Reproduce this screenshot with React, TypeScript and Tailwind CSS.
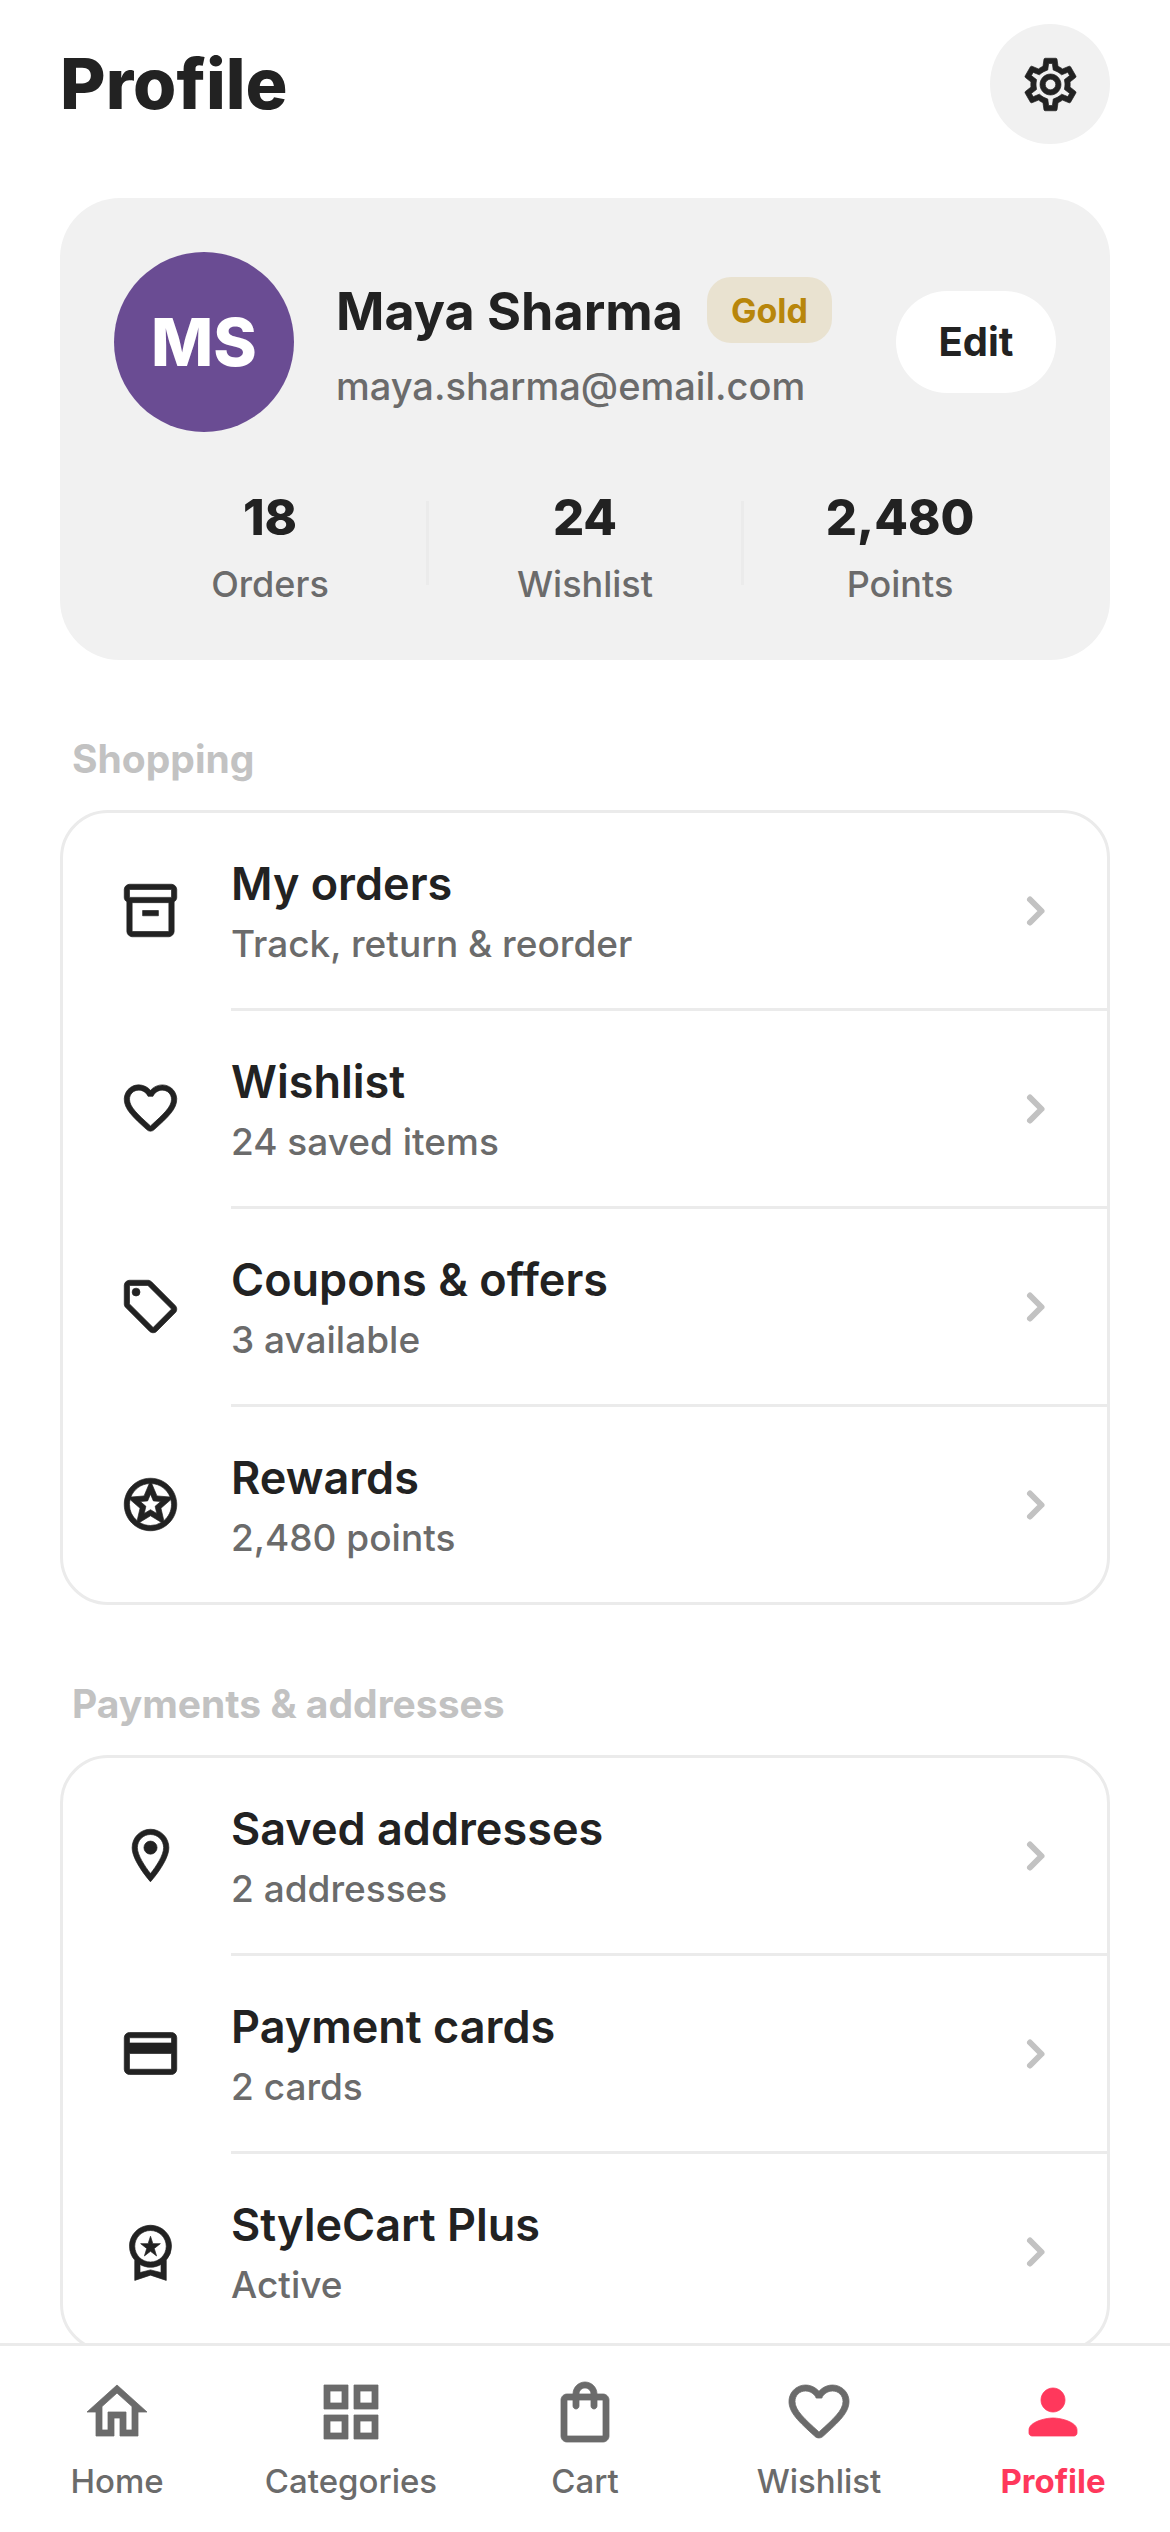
import type { ReactNode } from "react";
import type { IconType } from "react-icons";
import {
  MdOutlineCreditCard,
  MdOutlineGridView,
  MdOutlineHome,
  MdOutlineInventory2,
  MdOutlineLocalOffer,
  MdOutlineSettings,
  MdOutlineStars,
  MdOutlineWorkspacePremium,
} from "react-icons/md";

type IconProps = { className?: string };

function Glyph({ className, children }: IconProps & { children: ReactNode }) {
  return (
    <svg className={className} viewBox="0 0 24 24" fill="currentColor" stroke="currentColor" strokeWidth={0} aria-hidden="true">
      {children}
    </svg>
  );
}

function HeartIcon({ className }: IconProps) {
  return (
    <Glyph className={className}>
      <path d="M19.66 3.99c-2.64-1.8-5.9-.96-7.66 1.1-1.76-2.06-5.02-2.91-7.66-1.1-1.4.96-2.28 2.58-2.34 4.29-.14 3.88 3.3 6.99 8.55 11.76l.1.09c.76.69 1.93.69 2.69-.01l.11-.1c5.25-4.76 8.68-7.87 8.55-11.75-.06-1.7-.94-3.32-2.34-4.28zM12.1 18.55l-.1.1-.1-.1C7.14 14.24 4 11.39 4 8.5 4 6.5 5.5 5 7.5 5c1.54 0 3.04.99 3.57 2.36h1.87C13.46 5.99 14.96 5 16.5 5c2 0 3.5 1.5 3.5 3.5 0 2.89-3.14 5.74-7.9 10.05z" />
    </Glyph>
  );
}

function PinIcon({ className }: IconProps) {
  return (
    <Glyph className={className}>
      <path d="M12 2C8.13 2 5 5.13 5 9c0 5.25 7 13 7 13s7-7.75 7-13c0-3.87-3.13-7-7-7zM7 9c0-2.76 2.24-5 5-5s5 2.24 5 5c0 2.88-2.88 7.19-5 9.88C9.92 16.21 7 11.85 7 9z" />
      <circle cx="12" cy="9" r="2.5" />
    </Glyph>
  );
}

function BagIcon({ className }: IconProps) {
  return (
    <Glyph className={className}>
      <path d="M18 6h-2c0-2.21-1.79-4-4-4S8 3.79 8 6H6c-1.1 0-2 .9-2 2v12c0 1.1.9 2 2 2h12c1.1 0 2-.9 2-2V8c0-1.1-.9-2-2-2zm-6-2c1.1 0 2 .9 2 2h-4c0-1.1.9-2 2-2zm6 16H6V8h2v2c0 .55.45 1 1 1s1-.45 1-1V8h4v2c0 .55.45 1 1 1s1-.45 1-1V8h2v12z" />
    </Glyph>
  );
}

function PersonIcon({ className }: IconProps) {
  return (
    <Glyph className={className}>
      <path d="M12 12c2.21 0 4-1.79 4-4s-1.79-4-4-4-4 1.79-4 4 1.79 4 4 4zm0 2c-2.67 0-8 1.34-8 4v1c0 .55.45 1 1 1h14c.55 0 1-.45 1-1v-1c0-2.66-5.33-4-8-4z" />
    </Glyph>
  );
}

function ChevronIcon({ className }: IconProps) {
  return (
    <svg
      className={className}
      viewBox="0 0 60 60"
      fill="none"
      stroke="currentColor"
      strokeLinecap="round"
      strokeLinejoin="round"
      aria-hidden="true"
    >
      <path d="M25 18.5L36.5 30L25 41.5" strokeWidth={6} className="stroke-current!" />
    </svg>
  );
}

type Icon = IconType | ((props: IconProps) => ReactNode);

const stats = [
  { value: "18", label: "Orders" },
  { value: "24", label: "Wishlist" },
  { value: "2,480", label: "Points" },
];

const sections: { title: string; items: { icon: Icon; title: string; detail: string }[] }[] = [
  {
    title: "Shopping",
    items: [
      { icon: MdOutlineInventory2, title: "My orders", detail: "Track, return & reorder" },
      { icon: HeartIcon, title: "Wishlist", detail: "24 saved items" },
      { icon: MdOutlineLocalOffer, title: "Coupons & offers", detail: "3 available" },
      { icon: MdOutlineStars, title: "Rewards", detail: "2,480 points" },
    ],
  },
  {
    title: "Payments & addresses",
    items: [
      { icon: PinIcon, title: "Saved addresses", detail: "2 addresses" },
      { icon: MdOutlineCreditCard, title: "Payment cards", detail: "2 cards" },
      { icon: MdOutlineWorkspacePremium, title: "StyleCart Plus", detail: "Active" },
    ],
  },
];

const tabs: { icon: Icon; label: string; active?: boolean }[] = [
  { icon: MdOutlineHome, label: "Home" },
  { icon: MdOutlineGridView, label: "Categories" },
  { icon: BagIcon, label: "Cart" },
  { icon: HeartIcon, label: "Wishlist" },
  { icon: PersonIcon, label: "Profile", active: true },
];

function ProfileCard() {
  return (
    <section className="mt-[54px] rounded-[60px] bg-[#f1f1f1] p-[54px]">
      <div className="flex items-center">
        <div className="flex size-[180px] shrink-0 items-center justify-center rounded-full bg-[#6a4c93] text-[66px] font-extrabold text-white">
          MS
        </div>
        <div className="ml-[42px] min-w-0 flex-1">
          <div className="flex h-[72px] items-center gap-6">
            <h2 className="pt-1 text-[52px] leading-[72px] font-bold whitespace-nowrap">Maya Sharma</h2>
            <span className="flex h-[66px] items-center rounded-[24px] bg-[#e9e2d0] px-6 text-[34px] font-bold text-[#b8860b]">
              Gold
            </span>
          </div>
          <p className="mt-4 text-[38px] leading-[48px] font-medium text-[#6b6b6b]">maya.sharma@email.com</p>
        </div>
        <button className="h-[102px] w-[160px] shrink-0 rounded-full bg-white text-[40px] font-bold">Edit</button>
      </div>

      <dl className="mt-12 flex h-[126px] items-center">
        {stats.map((stat, i) => (
          <div key={stat.label} className="contents">
            {i > 0 && <div className="h-[84px] w-[3px] bg-[#ebebeb]" />}
            <div className="flex flex-1 flex-col-reverse pt-1 text-center">
              <dt className="text-[36px] leading-[54px] font-medium text-[#6b6b6b]">{stat.label}</dt>
              <dd className="text-[49px] leading-[78px] font-extrabold">{stat.value}</dd>
            </div>
          </div>
        ))}
      </dl>
    </section>
  );
}

export default function App() {
  return (
    <div className="flex h-screen flex-col bg-white font-[Inter,sans-serif] text-[#222222] [&_path[fill=none]]:stroke-none [&_svg]:stroke-[0.26]">
      <main className="min-h-0 flex-1 overflow-y-auto px-[60px] pt-6 [scrollbar-width:none]">
        <header className="flex items-center justify-between">
          <h1 className="text-[70px] leading-[96px] font-extrabold">Profile</h1>
          <button aria-label="Settings" className="flex size-[120px] items-center justify-center rounded-full bg-[#f1f1f1]">
            <MdOutlineSettings className="size-[63px]" />
          </button>
        </header>

        <ProfileCard />

        {sections.map((section) => (
          <section key={section.title} className="mt-[72px]">
            <h2 className="px-3 text-[39px] leading-[54px] font-bold text-[#c2c2c2]">{section.title}</h2>
            <ul className="mt-6 overflow-hidden rounded-[48px] border-[3px] border-[#ebebeb]">
              {section.items.map(({ icon: ItemIcon, title, detail }, i) => (
                <li key={title}>
                  {i > 0 && <div className="ml-[168px] h-[3px] bg-[#ebebeb]" />}
                  <a href="#" className="flex h-[195px] items-center px-[42px]">
                    <span className="flex w-[90px] shrink-0 justify-center">
                      <ItemIcon className="size-[63px]" />
                    </span>
                    <div className="ml-9 flex-1 pt-[3px]">
                      <p className="text-[45px] leading-[63px] font-semibold">{title}</p>
                      <p className="text-[37px] leading-[57px] font-medium text-[#6b6b6b]">{detail}</p>
                    </div>
                    <ChevronIcon className="size-[60px] shrink-0 text-[#c2c2c2]" />
                  </a>
                </li>
              ))}
            </ul>
          </section>
        ))}
      </main>

      <nav className="grid shrink-0 grid-cols-5 border-t-[3px] border-[#ebebeb] bg-white pt-[30px] pb-[28px]">
        {tabs.map(({ icon: TabIcon, label, active }) => (
          <a
            key={label}
            href="#"
            aria-current={active ? "page" : undefined}
            className={
              active
                ? "flex flex-col items-center gap-[11px] font-bold text-[#ff385c]"
                : "flex flex-col items-center gap-[11px] font-medium text-[#6b6b6b]"
            }
          >
            <TabIcon className="size-[72px]" />
            <span className="text-[33px] leading-[45px]">{label}</span>
          </a>
        ))}
      </nav>
    </div>
  );
}
